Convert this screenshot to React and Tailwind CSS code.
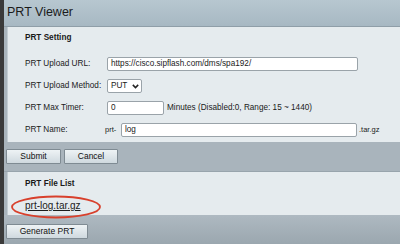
import React from 'react';

const font = { fontFamily: '"Liberation Sans", Arial, sans-serif' };

const Row = ({ label, children }) => (
  <div className="flex items-center h-[22px] whitespace-nowrap">
    <div className="w-[99px] pl-[17px] shrink-0">{label}</div>
    {children}
  </div>
);

const Btn = ({ children, w }) => (
  <button
    className={`h-[15px] ${w} border border-[#7f8b93] rounded-[1px] bg-gradient-to-b from-[#eef3f5] to-[#cfd9df] text-[8.5px] text-[#111] leading-none`}
  >
    {children}
  </button>
);

const App = () => {
  return (
    <div
      className="w-[400px] h-[244px] overflow-hidden flex bg-[#3a3a3a] text-[8.2px] text-[#1a1a1a]"
      style={font}
    >
      <div className="w-[4px] shrink-0 bg-[#3a3a3a]" />
      <div className="flex-1 flex flex-col bg-[#a9b4bc]">
        {/* header */}
        <div className="h-[27px] shrink-0 flex items-center pl-[3px] pb-[1px] bg-gradient-to-b from-[#b7c7d0] to-[#a7b8c3] border-b border-[#8f9ea8]">
          <span className="text-[12.5px] text-[#1b1b1b]">PRT Viewer</span>
        </div>

        {/* PRT Setting panel */}
        <div className="ml-[3px] h-[115px] shrink-0 bg-[#e5ebee] border-l border-[#c3cdd3] pt-[6px]">
          <div className="pl-[17px] h-[10px] leading-[10px] font-bold">PRT Setting</div>
          <div className="mt-[10px]">
            <Row label="PRT Upload URL:">
              <div className="w-[251px] h-[14px] bg-white border border-[#9aa3a9] rounded-[2px] flex items-center pl-[3px]">
                https://cisco.sipflash.com/dms/spa192/
              </div>
            </Row>
            <Row label="PRT Upload Method:">
              <div className="w-[35px] h-[14px] bg-white border border-[#9aa3a9] rounded-[2px] flex items-center justify-between pl-[3px] pr-[2px]">
                <span>PUT</span>
                <svg width="7" height="5" viewBox="0 0 7 5">
                  <path d="M0.8 0.9 L3.5 3.6 L6.2 0.9" fill="none" stroke="#222" strokeWidth="1.5" />
                </svg>
              </div>
            </Row>
            <Row label="PRT Max Timer:">
              <div className="w-[57px] h-[14px] bg-white border border-[#9aa3a9] rounded-[2px] flex items-center pl-[3px]">
                0
              </div>
              <span className="ml-[3px]">Minutes (Disabled:0, Range: 15 ~ 1440)</span>
            </Row>
            <Row label="PRT Name:">
              <span className="-ml-[2px] w-[16px] text-[7.5px]">prt-</span>
              <div className="w-[236px] h-[14px] bg-white border border-[#9aa3a9] rounded-[2px] flex items-center pl-[3px]">
                log
              </div>
              <span className="ml-[2px] text-[7.5px]">.tar.gz</span>
            </Row>
          </div>
        </div>

        {/* buttons band */}
        <div className="h-[30px] shrink-0 flex items-center gap-[3px] pl-[2px] border-b border-[#98a4ac]">
          <Btn w="w-[55px]">Submit</Btn>
          <Btn w="w-[54px]">Cancel</Btn>
        </div>

        {/* PRT File List panel */}
        <div className="relative ml-[3px] h-[43px] shrink-0 bg-[#e5ebee] border-l border-[#c3cdd3] pt-[7px]">
          <div className="pl-[17px] h-[10px] leading-[10px] font-bold">PRT File List</div>
          <div className="pl-[17px] mt-[12px] text-[10px] leading-[10px] text-[#1c1c1c] underline">
            prt-log.tar.gz
          </div>
          <svg
            className="absolute left-[2px] top-[23px]"
            width="92"
            height="24"
            viewBox="0 0 92 24"
          >
            <ellipse cx="46" cy="12" rx="44" ry="10.5" fill="none" stroke="#d8402c" strokeWidth="1.8" />
          </svg>
        </div>

        {/* generate band */}
        <div className="flex-1 flex items-start pt-[9px] pl-[2px] bg-gradient-to-b from-[#aeb9c1] to-[#9ba7af]">
          <Btn w="w-[82px]">Generate PRT</Btn>
        </div>
      </div>
    </div>
  );
};

export default App;
